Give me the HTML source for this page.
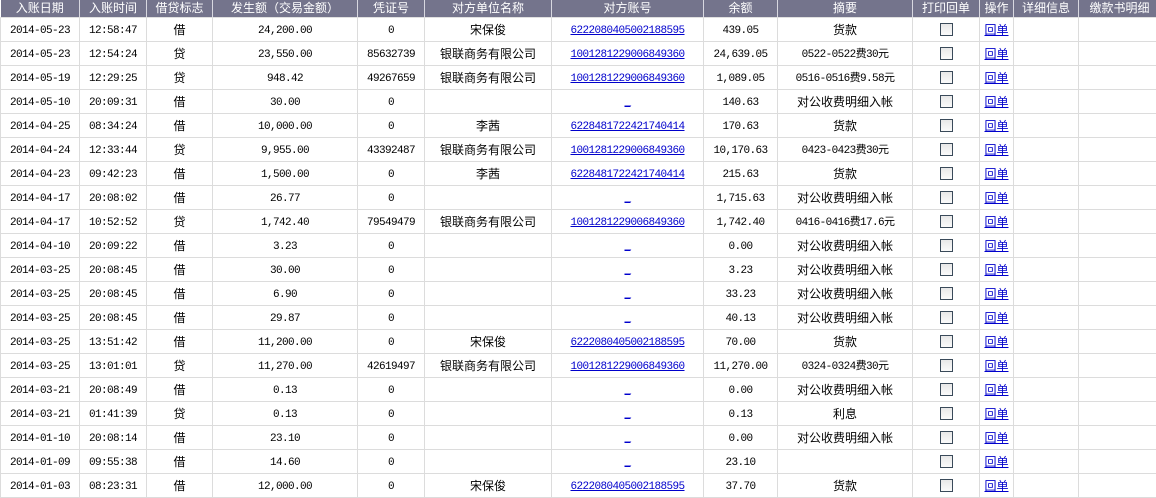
<!DOCTYPE html>
<html><head><meta charset="utf-8"><style>
body{margin:0;background:#fff;width:1156px;height:494px;overflow:hidden}
table{border-collapse:collapse;table-layout:fixed;width:1160px;font-family:"Liberation Mono","WenQuanYi Zen Hei",monospace;font-size:11px;letter-spacing:-0.6px;color:#000}
th{background:#74748c;color:#fff;font-weight:normal;height:17px;padding:0;border-right:1px solid #d8d8e0;border-bottom:1px solid #e0e0e0;font-family:"Liberation Sans","WenQuanYi Zen Hei",sans-serif;font-size:12px;letter-spacing:0;line-height:17px;white-space:nowrap;overflow:hidden}
td{height:20px;line-height:20px;padding:3px 0 0 0;text-align:center;vertical-align:middle;border:1px solid #dcdcdc;border-top:none;white-space:nowrap;overflow:hidden}
td.c{font-family:"Liberation Sans","WenQuanYi Zen Hei",sans-serif;letter-spacing:0;font-size:12px;padding-top:2px;height:21px;line-height:21px}
a{color:#0000cc;text-decoration:underline}
.cb{display:inline-block;width:11px;height:11px;border:1px solid #3a4a5a;background:linear-gradient(#e8e8e8,#fafafa);vertical-align:middle;position:relative;top:-1px}
</style></head><body>
<table>
<colgroup><col style="width:79px"><col style="width:67px"><col style="width:66px"><col style="width:145px"><col style="width:67px"><col style="width:127px"><col style="width:152px"><col style="width:74px"><col style="width:135px"><col style="width:67px"><col style="width:34px"><col style="width:65px"><col style="width:82px"></colgroup>
<tr><th>入账日期</th><th>入账时间</th><th>借贷标志</th><th>发生额（交易金额）</th><th>凭证号</th><th>对方单位名称</th><th>对方账号</th><th>余额</th><th>摘要</th><th>打印回单</th><th>操作</th><th>详细信息</th><th>缴款书明细</th></tr>
<tr><td>2014-05-23</td><td>12:58:47</td><td class="c">借</td><td>24,200.00</td><td>0</td><td class="c">宋保俊</td><td><a>6222080405002188595</a></td><td>439.05</td><td class="c">货款</td><td><span class="cb"></span></td><td class="c"><a>回单</a></td><td></td><td></td></tr>
<tr><td>2014-05-23</td><td>12:54:24</td><td class="c">贷</td><td>23,550.00</td><td>85632739</td><td class="c">银联商务有限公司</td><td><a>1001281229006849360</a></td><td>24,639.05</td><td>0522-0522费30元</td><td><span class="cb"></span></td><td class="c"><a>回单</a></td><td></td><td></td></tr>
<tr><td>2014-05-19</td><td>12:29:25</td><td class="c">贷</td><td>948.42</td><td>49267659</td><td class="c">银联商务有限公司</td><td><a>1001281229006849360</a></td><td>1,089.05</td><td>0516-0516费9.58元</td><td><span class="cb"></span></td><td class="c"><a>回单</a></td><td></td><td></td></tr>
<tr><td>2014-05-10</td><td>20:09:31</td><td class="c">借</td><td>30.00</td><td>0</td><td></td><td><a>_</a></td><td>140.63</td><td class="c">对公收费明细入帐</td><td><span class="cb"></span></td><td class="c"><a>回单</a></td><td></td><td></td></tr>
<tr><td>2014-04-25</td><td>08:34:24</td><td class="c">借</td><td>10,000.00</td><td>0</td><td class="c">李茜</td><td><a>6228481722421740414</a></td><td>170.63</td><td class="c">货款</td><td><span class="cb"></span></td><td class="c"><a>回单</a></td><td></td><td></td></tr>
<tr><td>2014-04-24</td><td>12:33:44</td><td class="c">贷</td><td>9,955.00</td><td>43392487</td><td class="c">银联商务有限公司</td><td><a>1001281229006849360</a></td><td>10,170.63</td><td>0423-0423费30元</td><td><span class="cb"></span></td><td class="c"><a>回单</a></td><td></td><td></td></tr>
<tr><td>2014-04-23</td><td>09:42:23</td><td class="c">借</td><td>1,500.00</td><td>0</td><td class="c">李茜</td><td><a>6228481722421740414</a></td><td>215.63</td><td class="c">货款</td><td><span class="cb"></span></td><td class="c"><a>回单</a></td><td></td><td></td></tr>
<tr><td>2014-04-17</td><td>20:08:02</td><td class="c">借</td><td>26.77</td><td>0</td><td></td><td><a>_</a></td><td>1,715.63</td><td class="c">对公收费明细入帐</td><td><span class="cb"></span></td><td class="c"><a>回单</a></td><td></td><td></td></tr>
<tr><td>2014-04-17</td><td>10:52:52</td><td class="c">贷</td><td>1,742.40</td><td>79549479</td><td class="c">银联商务有限公司</td><td><a>1001281229006849360</a></td><td>1,742.40</td><td>0416-0416费17.6元</td><td><span class="cb"></span></td><td class="c"><a>回单</a></td><td></td><td></td></tr>
<tr><td>2014-04-10</td><td>20:09:22</td><td class="c">借</td><td>3.23</td><td>0</td><td></td><td><a>_</a></td><td>0.00</td><td class="c">对公收费明细入帐</td><td><span class="cb"></span></td><td class="c"><a>回单</a></td><td></td><td></td></tr>
<tr><td>2014-03-25</td><td>20:08:45</td><td class="c">借</td><td>30.00</td><td>0</td><td></td><td><a>_</a></td><td>3.23</td><td class="c">对公收费明细入帐</td><td><span class="cb"></span></td><td class="c"><a>回单</a></td><td></td><td></td></tr>
<tr><td>2014-03-25</td><td>20:08:45</td><td class="c">借</td><td>6.90</td><td>0</td><td></td><td><a>_</a></td><td>33.23</td><td class="c">对公收费明细入帐</td><td><span class="cb"></span></td><td class="c"><a>回单</a></td><td></td><td></td></tr>
<tr><td>2014-03-25</td><td>20:08:45</td><td class="c">借</td><td>29.87</td><td>0</td><td></td><td><a>_</a></td><td>40.13</td><td class="c">对公收费明细入帐</td><td><span class="cb"></span></td><td class="c"><a>回单</a></td><td></td><td></td></tr>
<tr><td>2014-03-25</td><td>13:51:42</td><td class="c">借</td><td>11,200.00</td><td>0</td><td class="c">宋保俊</td><td><a>6222080405002188595</a></td><td>70.00</td><td class="c">货款</td><td><span class="cb"></span></td><td class="c"><a>回单</a></td><td></td><td></td></tr>
<tr><td>2014-03-25</td><td>13:01:01</td><td class="c">贷</td><td>11,270.00</td><td>42619497</td><td class="c">银联商务有限公司</td><td><a>1001281229006849360</a></td><td>11,270.00</td><td>0324-0324费30元</td><td><span class="cb"></span></td><td class="c"><a>回单</a></td><td></td><td></td></tr>
<tr><td>2014-03-21</td><td>20:08:49</td><td class="c">借</td><td>0.13</td><td>0</td><td></td><td><a>_</a></td><td>0.00</td><td class="c">对公收费明细入帐</td><td><span class="cb"></span></td><td class="c"><a>回单</a></td><td></td><td></td></tr>
<tr><td>2014-03-21</td><td>01:41:39</td><td class="c">贷</td><td>0.13</td><td>0</td><td></td><td><a>_</a></td><td>0.13</td><td class="c">利息</td><td><span class="cb"></span></td><td class="c"><a>回单</a></td><td></td><td></td></tr>
<tr><td>2014-01-10</td><td>20:08:14</td><td class="c">借</td><td>23.10</td><td>0</td><td></td><td><a>_</a></td><td>0.00</td><td class="c">对公收费明细入帐</td><td><span class="cb"></span></td><td class="c"><a>回单</a></td><td></td><td></td></tr>
<tr><td>2014-01-09</td><td>09:55:38</td><td class="c">借</td><td>14.60</td><td>0</td><td></td><td><a>_</a></td><td>23.10</td><td></td><td><span class="cb"></span></td><td class="c"><a>回单</a></td><td></td><td></td></tr>
<tr><td>2014-01-03</td><td>08:23:31</td><td class="c">借</td><td>12,000.00</td><td>0</td><td class="c">宋保俊</td><td><a>6222080405002188595</a></td><td>37.70</td><td class="c">货款</td><td><span class="cb"></span></td><td class="c"><a>回单</a></td><td></td><td></td></tr>
</table>
</body></html>
